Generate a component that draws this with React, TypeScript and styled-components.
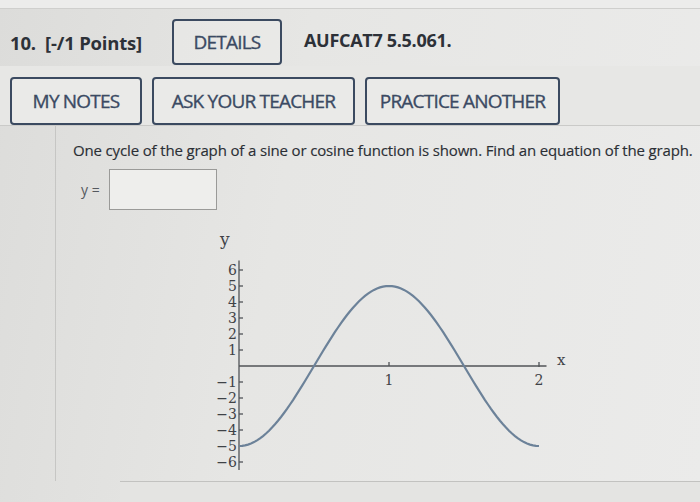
import React from "react";
import styled, { createGlobalStyle } from "styled-components";

const Global = createGlobalStyle`
  html, body { margin: 0; padding: 0; }
  body { background: #e2e2e0; font-family: "Open Sans", "Liberation Sans", sans-serif; }
`;

const Page = styled.div`
  width: 700px;
  height: 502px;
  overflow: hidden;
  background: linear-gradient(100deg, #dcdcda 0%, #e6e6e4 40%, #ebebea 100%);
  display: flex;
  flex-direction: column;
  color: #2d3138;
`;

const TopEdge = styled.div`
  height: 8px;
  background: #ececeb;
  border-bottom: 1px solid #cfcfcd;
`;

const Header = styled.div`
  display: flex;
  align-items: center;
  padding: 9px 0 0 10px;
  height: 48px;
`;

const Title = styled.div`
  font-weight: 700;
  font-size: 18.5px;
  letter-spacing: -0.2px;
  width: 162px;
  white-space: pre;
`;

const Code = styled.div`
  font-weight: 700;
  font-size: 18px;
  letter-spacing: -0.3px;
  margin-left: 22px;
  margin-top: -4px;
`;

const Button = styled.div<{ $w: number; $h?: number }>`
  box-sizing: border-box;
  width: ${(p) => p.$w}px;
  height: ${(p) => p.$h ?? 48}px;
  border: 2px solid #3b4a60;
  border-radius: 4px;
  display: flex;
  align-items: center;
  justify-content: center;
  font-size: 19px;
  letter-spacing: -0.8px;
  -webkit-text-stroke: 0.35px #3b4a63;
  color: #3b4a63;
  background: rgba(240, 240, 238, 0.4);
`;

const Actions = styled.div`
  display: flex;
  align-items: flex-end;
  gap: 10px;
  padding: 9px 0 0 10px;
  height: 50px;
  border-bottom: 1px solid #cacac8;
  background: #e7e7e5;
`;

const Question = styled.div`
  margin-left: 55px;
  border-left: 1px solid #c6c6c4;
  flex: 1;
  display: flex;
  flex-direction: column;
  padding: 14px 0 0 17px;
`;

const Prompt = styled.div`
  font-size: 15px;
  letter-spacing: -0.15px;
  white-space: nowrap;
  color: #2b2f35;
  -webkit-text-stroke: 0.15px #2b2f35;
`;

const AnswerRow = styled.div`
  display: flex;
  align-items: center;
  margin-top: 9px;
  padding-left: 8px;
  gap: 9px;
`;

const Label = styled.span`
  font-size: 14px;
  color: #55595f;
`;

const Input = styled.div`
  width: 108px;
  height: 41px;
  box-sizing: border-box;
  border: 1px solid #9a9a98;
  background: #eeeeec;
`;

const GraphWrap = styled.div`
  margin: 20px 0 0 128px;
`;

const Footer = styled.div`
  height: 20px;
  border-top: 1px solid #c2c2c0;
  margin-left: 120px;
  background: #e4e4e2;
`;

const Graph: React.FC = () => {
  const ox = 38;
  const oy = 136;
  const ux = 150;
  const uy = 16;
  const pts: string[] = [];
  for (let i = 0; i <= 100; i++) {
    const x = (2 * i) / 100;
    const y = -5 * Math.cos(Math.PI * x);
    pts.push(`${(ox + x * ux).toFixed(1)},${(oy - y * uy).toFixed(1)}`);
  }
  const ticks = [6, 5, 4, 3, 2, 1, -1, -2, -3, -4, -5, -6];
  return (
    <svg width="380" height="240" viewBox="0 0 380 240">
      <g fontFamily='"DejaVu Serif", "Liberation Serif", serif' fill="#3f4247" fontSize="14">
        <text x={ox - 19} y={15} fontSize="17">y</text>
        <text x={ox + 2 * ux + 18} y={oy - 1} fontSize="15">x</text>
        {ticks.map((t) => (
          <text key={t} x={ox - 2} y={oy - t * uy + 5} textAnchor="end">
            {t < 0 ? `\u2212${-t}` : t}
          </text>
        ))}
        <text x={ox + ux} y={oy + 19} textAnchor="middle">1</text>
        <text x={ox + 2 * ux} y={oy + 19} textAnchor="middle">2</text>
      </g>
      <g stroke="#505357" strokeWidth="1.3">
        <line x1={ox} y1={oy - 6.6 * uy} x2={ox} y2={oy + 6.6 * uy} />
        <line x1={ox} y1={oy} x2={ox + 2.05 * ux} y2={oy} />
        {ticks.map((t) => (
          <line key={t} x1={ox} y1={oy - t * uy} x2={ox + 4} y2={oy - t * uy} />
        ))}
        <line x1={ox + ux} y1={oy} x2={ox + ux} y2={oy - 4} />
        <line x1={ox + 2 * ux} y1={oy - 4} x2={ox + 2 * ux} y2={oy + 1} />
      </g>
      <polyline points={pts.join(" ")} fill="none" stroke="#6c8299" strokeWidth="2.2" />
    </svg>
  );
};

export default function App() {
  return (
    <>
      <Global />
      <Page>
        <TopEdge />
        <Header>
          <Title>{"10.  [-/1 Points]"}</Title>
          <Button $w={110} $h={46}>DETAILS</Button>
          <Code>AUFCAT7 5.5.061.</Code>
        </Header>
        <Actions>
          <Button $w={132}>MY NOTES</Button>
          <Button $w={203}>ASK YOUR TEACHER</Button>
          <Button $w={195}>PRACTICE ANOTHER</Button>
        </Actions>
        <Question>
          <Prompt>One cycle of the graph of a sine or cosine function is shown. Find an equation of the graph.</Prompt>
          <AnswerRow>
            <Label>y =</Label>
            <Input />
          </AnswerRow>
          <GraphWrap>
            <Graph />
          </GraphWrap>
        </Question>
        <Footer />
      </Page>
    </>
  );
}
